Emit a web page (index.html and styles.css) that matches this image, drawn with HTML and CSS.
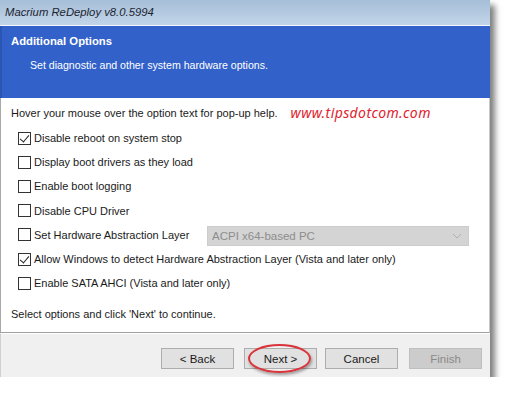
FILE: index.html
```html
<!DOCTYPE html>
<html lang="en">
<head>
    <meta charset="UTF-8">
    <title>Macrium ReDeploy v8.0.5994</title>
    <link rel="stylesheet" href="styles.css">
</head>
<body>
    <div class="window">
        <div class="titlebar">Macrium ReDeploy v8.0.5994</div>
        <div class="banner">
            <h1>Additional Options</h1>
            <p>Set diagnostic and other system hardware options.</p>
        </div>
        <div class="panel">
            <div class="hint">
                <span>Hover your mouse over the option text for pop-up help.</span>
                <span class="watermark">www.tipsdotcom.com</span>
            </div>
            <div class="options">
                <label class="option"><span class="box checked"></span>Disable reboot on system stop</label>
                <label class="option"><span class="box"></span>Display boot drivers as they load</label>
                <label class="option"><span class="box"></span>Enable boot logging</label>
                <label class="option"><span class="box"></span>Disable CPU Driver</label>
                <div class="option">
                    <label class="option-label"><span class="box"></span>Set Hardware Abstraction Layer</label>
                    <div class="combo">
                        <span>ACPI x64-based PC</span>
                        <svg width="10" height="6" viewBox="0 0 10 6"><path d="M1 1 L5 5 L9 1" fill="none" stroke="#b0b0b0" stroke-width="1"/></svg>
                    </div>
                </div>
                <label class="option"><span class="box checked"></span>Allow Windows to detect Hardware Abstraction Layer (Vista and later only)</label>
                <label class="option"><span class="box"></span>Enable SATA AHCI (Vista and later only)</label>
            </div>
            <p class="footnote">Select options and click 'Next' to continue.</p>
        </div>
        <div class="buttons">
            <button class="btn">&lt; Back</button>
            <div class="btn-wrap">
                <button class="btn">Next &gt;</button>
                <span class="circle"></span>
            </div>
            <button class="btn">Cancel</button>
            <button class="btn disabled">Finish</button>
        </div>
    </div>
</body>
</html>
```

FILE: styles.css
```css
* {
    box-sizing: border-box;
}

body {
    margin: 0;
    background-color: #ffffff;
    font-family: 'Liberation Sans', Arial, sans-serif;
    font-size: 11px;
    color: #1a1a1a;
}

.window {
    width: 490px;
    box-shadow: 5px 5px 6px rgba(0, 0, 0, 0.5);
}

.titlebar {
    height: 26px;
    padding: 6px 0 0 5px;
    background: linear-gradient(#a6bed8, #c2d5e9);
    border-bottom: 1px solid #f4f8fc;
    font-style: italic;
    font-size: 11.3px;
    color: #1c2430;
}

.banner {
    height: 72px;
    padding: 9px 9px;
    background-color: #3262c9;
    border-left: 2px solid #2a55b0;
    color: #ffffff;
}

.banner h1 {
    margin: 0;
    font-size: 11.3px;
    font-weight: bold;
}

.banner p {
    margin: 12px 0 0 19px;
    font-size: 10.6px;
}

.panel {
    height: 235px;
    padding: 9px 0 0 10px;
    background-color: #ffffff;
    border-left: 1px solid #a8a8a8;
    border-right: 1px solid #c8c8c8;
    border-bottom: 1px solid #a0a0a0;
}

.hint {
    display: flex;
    gap: 13px;
    height: 14px;
}

.watermark {
    color: #e0232e;
    font-family: 'Noto Sans', sans-serif;
    font-style: italic;
    font-size: 14px;
    letter-spacing: 0.4px;
    margin-top: -4px;
}

.options {
    display: flex;
    flex-direction: column;
    margin: 5px 0 0 7px;
}

.option, .option-label {
    display: flex;
    align-items: center;
    height: 24.2px;
}

.option-label {
    width: 189px;
}

.box {
    width: 13px;
    height: 13px;
    margin-right: 3px;
    border: 1px solid #333333;
    background-color: #ffffff;
    position: relative;
}

.box.checked::after {
    content: "";
    position: absolute;
    left: 3px;
    top: 0px;
    width: 4px;
    height: 8px;
    border-right: 1px solid #222;
    border-bottom: 1px solid #222;
    transform: rotate(40deg);
}

.combo {
    display: flex;
    align-items: center;
    justify-content: space-between;
    width: 262px;
    height: 20px;
    margin-top: 3px;
    padding: 0 6px 0 4px;
    background-color: #d4d4d4;
    border: 1px solid #cccccc;
    color: #8d8d8d;
    font-size: 11.5px;
}

.footnote {
    margin: 13px 0 0 0;
}

.buttons {
    display: flex;
    justify-content: flex-end;
    gap: 8px;
    height: 44px;
    padding: 14px 8px 0 0;
    background-color: #f0f0f0;
    border-top: 1px solid #ffffff;
    border-left: 1px solid #d0d0d0;
}

.btn-wrap {
    position: relative;
    display: flex;
    margin-left: 2px;
}

.btn {
    width: 73px;
    height: 21px;
    margin: 0;
    padding: 0;
    background-color: #e1e1e1;
    border: 1px solid #adadad;
    font-family: inherit;
    font-size: 11.5px;
    color: #1a1a1a;
}

.btn.disabled {
    margin-left: 3px;
    background-color: #cccccc;
    border-color: #bfbfbf;
    color: #8a8a8a;
}

.circle {
    position: absolute;
    left: 4px;
    top: -4px;
    width: 63px;
    height: 29px;
    border: 2px solid #d9343a;
    border-radius: 50%;
    box-shadow: 1px 2px 3px rgba(0, 0, 0, 0.35);
}
```
